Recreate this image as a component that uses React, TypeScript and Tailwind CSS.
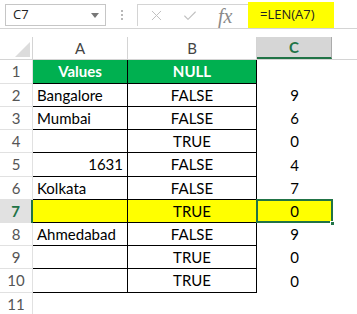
import { X, Check } from 'lucide-react';

type Row = { a: string; aRight?: boolean; b: string; c: string };

const rows: Row[] = [
  { a: 'Bangalore', b: 'FALSE', c: '9' },
  { a: 'Mumbai', b: 'FALSE', c: '6' },
  { a: '', b: 'TRUE', c: '0' },
  { a: '1631', aRight: true, b: 'FALSE', c: '4' },
  { a: 'Kolkata', b: 'FALSE', c: '7' },
  { a: '', b: 'TRUE', c: '0' },
  { a: 'Ahmedabad', b: 'FALSE', c: '9' },
  { a: '', b: 'TRUE', c: '0' },
  { a: '', b: 'TRUE', c: '0' },
];

const cellFont = { fontFamily: 'Lato, "Liberation Sans", sans-serif' };
const uiFont = { fontFamily: '"Open Sans", "Liberation Sans", sans-serif' };

export default function App() {
  return (
    <div className="relative w-[357px] h-[314px] bg-white overflow-hidden text-black">
      {/* Formula bar */}
      <div className="h-[29px] border-b border-[#d4d4d4] flex items-start pt-[4px]" style={uiFont}>
        <div className="ml-[5px] w-[101px] h-[22px] border border-[#c6c6c6] flex items-center justify-between pl-[7px] pr-[6px]">
          <span className="text-[13px] text-[#222]">C7</span>
          <div className="w-0 h-0 border-l-[4px] border-r-[4px] border-t-[5px] border-l-transparent border-r-transparent border-t-[#777]" />
        </div>
        <div className="w-[31px] h-[22px] flex flex-col items-center justify-center gap-[2px]">
          <div className="w-[2px] h-[2px] bg-[#b8b8b8]" />
          <div className="w-[2px] h-[2px] bg-[#b8b8b8]" />
          <div className="w-[2px] h-[2px] bg-[#b8b8b8]" />
        </div>
        <div className="w-[111px] h-[22px] border-l border-t border-[#d4d4d4] flex items-center">
          <X className="ml-[10px] w-[17px] h-[17px] text-[#c0c0c0]" strokeWidth={1.4} />
          <Check className="ml-[17px] w-[16px] h-[16px] text-[#c0c0c0]" strokeWidth={1.6} />
          <span
            className="ml-[20px] text-[20px] italic text-[#8a8a8a] leading-none"
            style={{ fontFamily: '"Liberation Serif", serif' }}
          >
            fx
          </span>
        </div>
        <div className="-mt-[2px] w-[86px] h-[26px] bg-[#ffff00] flex items-center pl-[12px]">
          <span className="text-[13px] text-[#222]">=LEN(A7)</span>
        </div>
      </div>

      {/* Sheet */}
      <div className="mt-[8px]" style={cellFont}>
        {/* Column headers */}
        <div className="flex h-[23px] border-b border-[#d4d4d4]">
          <div className="w-[33px] border-r border-[#d4d4d4] relative">
            <svg className="absolute right-[2px] bottom-[2px]" width="15" height="15" viewBox="0 0 15 15">
              <polygon points="15,0 15,15 0,15" fill="#dcdcdc" />
            </svg>
          </div>
          <div className="w-[95px] border-r border-[#d4d4d4] flex items-center justify-center text-[15px] text-[#444]">A</div>
          <div className="w-[129px] border-r border-[#d4d4d4] flex items-center justify-center text-[15px] text-[#444]">B</div>
          <div className="w-[75px] bg-[#d6d6d6] border-b-2 border-[#217346] border-r border-r-[#ababab] flex items-center justify-center text-[15px] font-bold text-[#217346]">C</div>
          <div className="flex-1" />
        </div>

        {/* Row 1 */}
        <div className="flex h-[24px]">
          <div className="w-[33px] border-r border-b border-[#e1e1e1] flex items-center justify-center text-[15px] text-[#555]">1</div>
          <div className="w-[95px] bg-[#00b050] border-r border-b border-black flex items-center justify-center text-[15px] font-bold text-white">Values</div>
          <div className="w-[129px] bg-[#00b050] border-r border-b border-black flex items-center justify-center text-[15px] font-bold text-white">NULL</div>
          <div className="flex-1" />
        </div>

        {rows.map((r, i) => {
          const n = i + 2;
          const sel = n === 7;
          const tall = n === 5 || n === 10;
          return (
            <div key={n} className={`flex ${tall ? 'h-[24px]' : 'h-[23px]'}`}>
              <div
                className={
                  sel
                    ? 'w-[33px] bg-[#e1e1e1] border-r-2 border-r-[#217346] flex items-center justify-center text-[15px] font-bold text-[#217346]'
                    : 'w-[33px] border-r border-b border-[#e1e1e1] flex items-center justify-center text-[15px] text-[#555]'
                }
              >
                {n}
              </div>
              <div
                className={`w-[95px] border-r border-b border-black flex items-center text-[15px] ${
                  r.aRight ? 'justify-end pr-[4px]' : 'pl-[4px]'
                } ${sel ? 'bg-[#ffff00]' : ''}`}
              >
                {r.a}
              </div>
              <div className={`w-[129px] border-r border-b border-black flex items-center justify-center text-[15px] ${sel ? 'bg-[#ffff00]' : ''}`}>
                {r.b}
              </div>
              <div className={`w-[75px] flex items-center justify-center text-[15px] relative ${sel ? 'bg-[#ffff00]' : ''}`}>
                {r.c}
                {sel && (
                  <>
                    <div className="absolute -left-[1px] -top-[1px] -right-[1px] bottom-0 border-2 border-[#217346]" />
                    <div className="absolute -right-[3px] -bottom-[3px] w-[5px] h-[5px] bg-[#217346] border border-white" />
                  </>
                )}
              </div>
              <div className="flex-1" />
            </div>
          );
        })}

        {/* Row 11 */}
        <div className="flex h-[23px]">
          <div className="w-[33px] border-r border-[#e1e1e1] flex items-center justify-center text-[15px] text-[#555]">11</div>
          <div className="flex-1" />
        </div>
      </div>
    </div>
  );
}
